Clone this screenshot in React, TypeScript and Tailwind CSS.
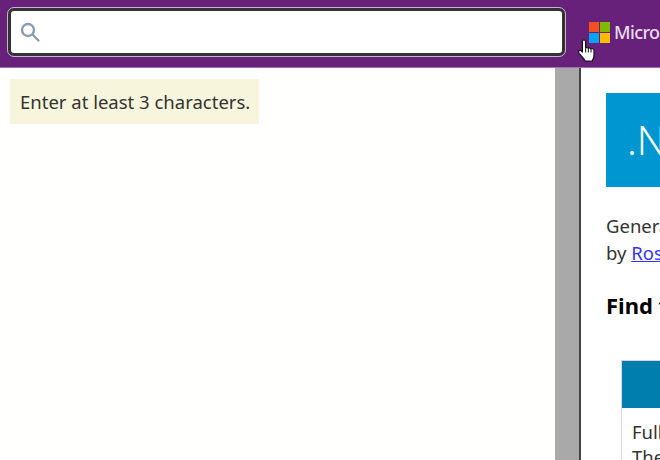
import React from 'react';

const font = "font-['Noto_Sans',sans-serif]";

const MsLogo = () => (
  <svg width="21" height="21" viewBox="0 0 21 21" className="shrink-0 mt-[1px]">
    <rect x="0" y="0" width="10" height="10" fill="#f25022" />
    <rect x="11" y="0" width="10" height="10" fill="#7fba00" />
    <rect x="0" y="11" width="10" height="10" fill="#00a4ef" />
    <rect x="11" y="11" width="10" height="10" fill="#ffb900" />
  </svg>
);

const HandCursor = () => (
  <svg width="18" height="25" viewBox="0 0 18 24" className="absolute left-[578px] top-[38px]">
    <path
      d="M6 1.500c1 0 1.600.7 1.600 1.600v6.600c.3-.9 2.400-1 2.700.2.500-.8 2.400-.7 2.700.5.700-.6 2.900-.3 3 1.200V17c0 2.500-1.200 3.500-1.700 5.500H7C6.300 20 3.800 18.300 1.300 15c-1-1.500-.8-2.700.2-3 .8-.2 1.900.3 2.900 1.500V3.100C4.400 2.200 5 1.500 6 1.500z"
      fill="#fff"
      stroke="#111"
      strokeWidth="1.200"
      strokeLinejoin="round"
    />
    <path d="M7.600 10v4M10.300 10v4M13 10.500V14" stroke="#111" strokeWidth="1" fill="none" />
  </svg>
);

export default function App() {
  return (
    <div className={`relative w-[660px] h-[460px] overflow-hidden bg-white flex flex-col ${font}`}>
      {/* Header */}
      <div className="h-[68px] shrink-0 bg-[#68217a] flex items-center pl-2 border-b border-[#a070b0]">
        <div className="w-[557px] h-[48px] -mt-[3px] shrink-0 rounded-[6px] bg-white border-[3px] border-[#333] outline outline-1 outline-[#c8b4d0] flex items-center pl-2">
          <svg width="22" height="22" viewBox="0 0 22 22" fill="none" stroke="#8c9bb0" strokeWidth="2.400">
            <circle cx="9" cy="9" r="6" />
            <path d="M13.500 13.500 L19.500 19.500" strokeLinecap="round" />
          </svg>
        </div>
        <div className="ml-[24px] flex items-center gap-[4px] -mt-[3px]">
          <MsLogo />
          <span className="text-[18px] tracking-[-0.6px] font-medium text-[#e6dcea] whitespace-nowrap">Microsoft</span>
        </div>
      </div>

      <div className="flex-1 flex min-h-0">
        {/* Search panel */}
        <div className="w-[555px] shrink-0 bg-[#fffffd] pt-[11px] pl-[10px]">
          <div className="w-[249px] h-[45px] bg-[#f7f6dc] flex items-center pl-[10px] text-[18.500px] text-[#333] whitespace-nowrap">
            Enter at least 3 characters.
          </div>
        </div>
        {/* Scrollbar */}
        <div className="w-[24px] shrink-0 bg-[#a9a9a9]" />
        <div className="w-[2px] shrink-0 bg-[#444]" />
        {/* Article */}
        <div className="flex-1 overflow-hidden bg-white pl-[25px] pt-[25px]">
          <div className="w-[200px] h-[94px] bg-[#0096d1] flex items-center pl-[21px] text-[40px] font-light text-white whitespace-nowrap">
            .NET
          </div>
          <div className="mt-[25px] text-[18.500px] leading-[27px] text-[#333] whitespace-nowrap">
            <div>Generated</div>
            <div>
              by <a className="text-[#3333ff] underline">Rosetta</a>
            </div>
          </div>
          <div className="mt-[24px] text-[22px] font-bold text-black whitespace-nowrap leading-[30px]">Find the</div>
          <div className="mt-[40px] ml-[15px] w-[200px] border border-[#ddd0e8]">
            <div className="h-[47px] bg-[#007ead]" />
            <div className="pt-[11px] pl-[10px] text-[18.500px] leading-[25px] text-[#333] whitespace-nowrap">
              <div>Full</div>
              <div>The</div>
            </div>
          </div>
        </div>
      </div>

      <HandCursor />
    </div>
  );
}
